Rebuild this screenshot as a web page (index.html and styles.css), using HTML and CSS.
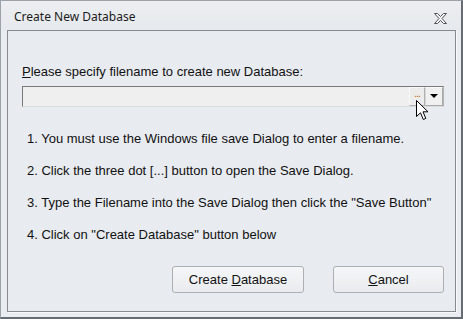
FILE: index.html
```html
<!DOCTYPE html>
<html>
<head>
    <meta charset="UTF-8">
    <title>Create New Database</title>
    <link rel="stylesheet" href="styles.css">
</head>
<body>
    <div class="window">
        <div class="titlebar">
            <span class="title">Create New Database</span>
            <svg class="close" width="13" height="11" viewBox="0 0 13 11">
                <path d="M0.5 0.5 H3.5 L6.5 3.5 L9.5 0.5 H12.5 L8 5.5 L12.5 10.5 H9.5 L6.5 7.5 L3.5 10.5 H0.5 L5 5.5 Z"
                      fill="#f4f5f7" stroke="#4f5256" stroke-width="1" stroke-linejoin="round"/>
            </svg>
        </div>
        <div class="panel">
            <div class="label"><u>P</u>lease specify filename to create new Database:</div>
            <div class="filebox">
                <div class="field"></div>
                <div class="dots">...</div>
                <div class="drop"><span class="arrow"></span></div>
                <svg class="cursor" width="14" height="22" viewBox="0 0 14 22">
                    <path d="M0.5 0.5 L0.5 16.5 L4.5 12.8 L7.3 19.5 L9.8 18.4 L7 11.8 L12 11.8 Z"
                          fill="#ffffff" stroke="#000000" stroke-width="1" stroke-linejoin="miter"/>
                </svg>
            </div>
            <ol class="steps">
                <li>1. You must use the Windows file save Dialog to enter a filename.</li>
                <li>2. Click the three dot [...] button to open the Save Dialog.</li>
                <li>3. Type the Filename into the Save Dialog then click the "Save Button"</li>
                <li>4. Click on "Create Database" button below</li>
            </ol>
            <div class="buttons">
                <button class="btn create">Create <u>D</u>atabase</button>
                <button class="btn cancel"><u>C</u>ancel</button>
            </div>
        </div>
    </div>
</body>
</html>
```

FILE: styles.css
```css
body {
    margin: 0;
    padding: 0;
    background-color: #e9ecf0;
    font-family: "Liberation Sans", Arial, sans-serif;
    font-size: 13px;
    color: #111;
}

.window {
    width: 463px;
    height: 319px;
    box-sizing: border-box;
    border-left: 1px solid #9da2a8;
    border-top: 1px solid #9da2a8;
    border-right: 2px solid #666c72;
    border-bottom: 2px solid #666c72;
    background-color: #e9ecf0;
    display: flex;
    flex-direction: column;
}

.titlebar {
    height: 29px;
    flex: none;
    display: flex;
    align-items: center;
    padding-left: 13px;
    padding-right: 14px;
    background: linear-gradient(#eceef1, #e6e9ed);
}

.title {
    flex: 1;
    font-family: "Noto Sans", "Open Sans", sans-serif;
    font-size: 12px;
    color: #1b1b1b;
    margin-top: 1px;
}

.close {
    display: block;
    margin-top: 6px;
}

.panel {
    flex: 1;
    margin: 0 5px 5px 6px;
    border: 1px solid #878b90;
    box-shadow: 1px 1px 0 #f7f8fa;
    background-color: #e8ebf0;
    display: flex;
    flex-direction: column;
    padding: 0 11px 0 14px;
}

.label {
    margin-top: 33px;
    line-height: 15px;
    height: 15px;
}

.filebox {
    position: relative;
    margin-top: 7px;
    height: 21px;
    display: flex;
    box-sizing: border-box;
    border-top: 1px solid #7a7a7a;
    border-left: 1px solid #7a7a7a;
    border-right: 1px solid #b4b4b4;
    border-bottom: 1px solid #dcdcdc;
    background-color: #efefef;
}

.field {
    flex: 1;
}

.dots {
    width: 16px;
    box-sizing: border-box;
    border: 1px solid #b0b0b0;
    border-top-color: #f8f8f8;
    border-left-color: #f8f8f8;
    background-color: #ececec;
    color: #c0741c;
    font-size: 11px;
    line-height: 10px;
    text-align: center;
    letter-spacing: -1px;
}

.drop {
    width: 18px;
    box-sizing: border-box;
    border: 1px solid #a8a8a8;
    border-top-color: #fafafa;
    border-left-color: #d8d8d8;
    background-color: #f0f0f0;
    display: flex;
    align-items: center;
    justify-content: center;
}

.arrow {
    width: 0;
    height: 0;
    border-left: 4px solid transparent;
    border-right: 4px solid transparent;
    border-top: 4px solid #000;
    margin-top: -1px;
}

.cursor {
    position: absolute;
    left: 393px;
    top: 13px;
}

.steps {
    list-style: none;
    margin: 24px 0 0 5px;
    padding: 0;
}

.steps li {
    height: 32px;
    line-height: 15px;
}

.buttons {
    display: flex;
    justify-content: flex-end;
    gap: 29px;
    margin-top: 7px;
}

.btn {
    height: 27px;
    font-family: "Liberation Sans", Arial, sans-serif;
    font-size: 13px;
    color: #111;
    border: 1px solid #acb0b5;
    border-radius: 3px;
    background: linear-gradient(#f5f6f8, #e9ebee);
    padding: 0;
}

.create {
    width: 132px;
}

.cancel {
    width: 111px;
}
```
